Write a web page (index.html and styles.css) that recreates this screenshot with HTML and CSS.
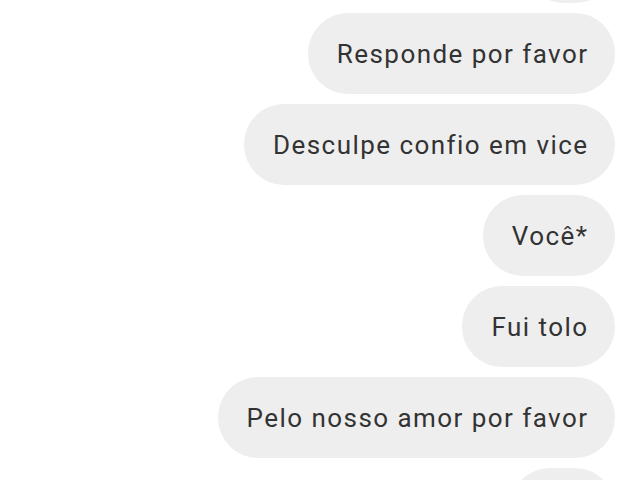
FILE: index.html
```html
<!DOCTYPE html>
<html lang="pt">
  <head>
    <meta charset="UTF-8" />
    <meta name="viewport" content="width=device-width, initial-scale=1.0" />
    <title>Conversa</title>
    <link rel="stylesheet" href="styles.css">
  </head>

  <body>
    <div id="thread">
      <div class="bubble bubble-short">&nbsp;</div>
      <div class="bubble">Responde por favor</div>
      <div class="bubble">Desculpe confio em vice</div>
      <div class="bubble">Você*</div>
      <div class="bubble">Fui tolo</div>
      <div class="bubble">Pelo nosso amor por favor</div>
      <div class="bubble bubble-short bubble-last">&nbsp;</div>
    </div>
  </body>
</html>
```

FILE: styles.css
```css
html,
body {
  margin: 0;
  height: 100%;
  overflow: hidden;
  background: #fff;
}

#thread {
  display: flex;
  flex-direction: column;
  align-items: flex-end;
  gap: 10px;
  margin-top: -78px;
  padding-right: 25px;
  font-family: Roboto, "Noto Sans", sans-serif;
}

.bubble {
  background: #eeeeee;
  color: #333;
  font-size: 26px;
  line-height: 37px;
  letter-spacing: 1.45px;
  padding: 23px 26.5px 21px 29px;
  border-radius: 40px;
  white-space: nowrap;
}

.bubble-short {
  width: 36px;
}

.bubble-last {
  width: 50px;
}
```
